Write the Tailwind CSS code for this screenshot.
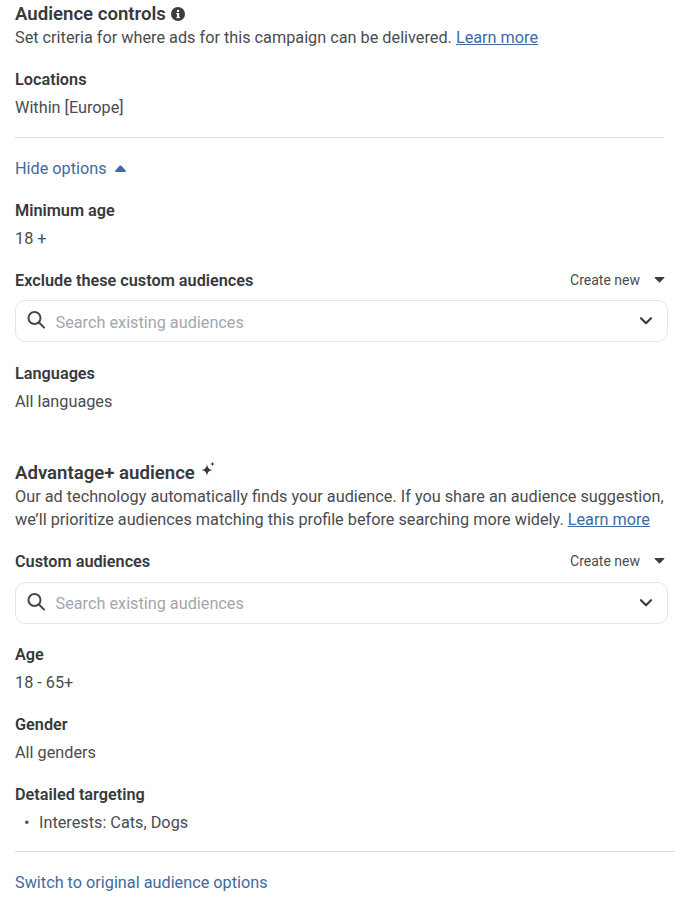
<!DOCTYPE html>
<html><head><meta charset="utf-8"><script src="https://cdn.jsdelivr.net/npm/@tailwindcss/browser@4"></script></head>
<body class="bg-white overflow-hidden">
<main class="w-[689px] h-[900px] overflow-hidden pl-[15px] font-['Roboto',sans-serif] text-[16.25px] leading-[24px] text-[#4a4c50]">
  <section class="pt-[2px]">
    <div class="flex items-center gap-[5px] h-[24px]">
      <h2 class="text-[18.6px] font-semibold text-[#37393c]">Audience controls</h2>
      <svg class="w-[14px] h-[14px]" viewBox="0 0 14 14"><circle cx="7" cy="7" r="7" fill="#3a3d42"/><rect x="6" y="6" width="2.2" height="5" fill="#fff"/><rect x="5.2" y="6" width="2" height="1.1" fill="#fff"/><rect x="5.4" y="10" width="3.6" height="1.1" fill="#fff"/><circle cx="7" cy="3.9" r="1.2" fill="#fff"/></svg>
    </div>
    <p>Set criteria for where ads for this campaign can be delivered. <a class="text-[#3f6a9f] underline">Learn more</a></p>
  </section>
  <section class="mt-[18px]">
    <h3 class="font-semibold text-[#37393c]">Locations</h3>
    <p class="mt-[4px]">Within [Europe]</p>
  </section>
  <hr class="w-[649px] mt-[17px] border-[#dcdddf]">
  <button class="flex items-center gap-[8px] mt-[19px] h-[24px] text-[#3f6a9f]">Hide options
    <svg class="w-[11px] h-[7px] -mt-[2px]" viewBox="0 0 11 7"><path d="M4.300 1.100C5 .3 6 .3 6.700 1.100L10.600 5.400C11.100 6 10.900 7 10 7H1C.1 7-.1 6 .4 5.400Z" fill="#3f6ba3"/></svg>
  </button>
  <section class="mt-[18px]">
    <h3 class="font-semibold text-[#37393c]">Minimum age</h3>
    <p class="mt-[4px]">18 +</p>
  </section>
  <section class="mt-[18px] w-[653px]">
    <div class="flex justify-between items-center h-[24px]">
      <h3 class="font-semibold text-[#37393c]">Exclude these custom audiences</h3>
      <span class="flex items-center gap-[14px] text-[14px] pr-[3px] relative -top-[1px]">Create new <svg class="w-[11px] h-[6px]" viewBox="0 0 12 7"><path d="M.7 0h10.600a.5.5 0 0 1 .4.8L6 6.800.3.800A.5.5 0 0 1 .7 0Z" fill="#3a3d42"/></svg></span>
    </div>
    <div class="mt-[7px] h-[42px] border-[1.5px] border-[#e4e5e7] rounded-[10px] flex items-center pl-[9.5px] pr-[15.5px]">
      <svg class="w-[20px] h-[20px] shrink-0 -mt-[2px]" viewBox="0 0 20 20" fill="none" stroke="#44474c" stroke-width="2"><circle cx="8.500" cy="8" r="6"/><path d="m13 12.500 5 5" stroke-linecap="round"/></svg>
      <span class="ml-[10px] text-[#a3a7ad] flex-1 relative top-[2px]">Search existing audiences</span>
      <svg class="w-[12px] h-[8px]" viewBox="0 0 12 8" fill="none" stroke="#3a3d42" stroke-width="2.200"><path d="m1 1.200 5 5 5-5" stroke-linecap="round" stroke-linejoin="round"/></svg>
    </div>
  </section>
  <section class="mt-[20px]">
    <h3 class="font-semibold text-[#37393c]">Languages</h3>
    <p class="mt-[4px]">All languages</p>
  </section>
  <section class="mt-[47px]">
    <div class="flex items-start h-[24px]">
      <h2 class="text-[18.6px] font-semibold text-[#37393c]">Advantage+ audience</h2>
      <svg class="w-[15px] h-[15px] ml-[6px]" viewBox="0 0 15 15" fill="#37393c"><path d="M6 3C6.500 7 8 8.500 12 9 8 9.500 6.500 11 6 15 5.500 11 4 9.500 0 9 4 8.500 5.500 7 6 3Z"/><path d="M11.500.5C11.700 2 12.200 2.600 14 3 12.200 3.400 11.700 4 11.500 5.500 11.300 4 10.800 3.400 9 3 10.800 2.600 11.300 2 11.500.5Z"/></svg>
    </div>
    <p class="whitespace-nowrap leading-[23px]">Our ad technology automatically finds your audience. If you share an audience suggestion,<br>we’ll prioritize audiences matching this profile before searching more widely. <a class="text-[#3f6a9f] underline">Learn more</a></p>
  </section>
  <section class="mt-[19px] w-[653px]">
    <div class="flex justify-between items-center h-[24px]">
      <h3 class="font-semibold text-[#37393c]">Custom audiences</h3>
      <span class="flex items-center gap-[14px] text-[14px] pr-[3px] relative -top-[1px]">Create new <svg class="w-[11px] h-[6px]" viewBox="0 0 12 7"><path d="M.7 0h10.600a.5.5 0 0 1 .4.8L6 6.800.3.800A.5.5 0 0 1 .7 0Z" fill="#3a3d42"/></svg></span>
    </div>
    <div class="mt-[8px] h-[42px] border-[1.5px] border-[#e4e5e7] rounded-[10px] flex items-center pl-[9.5px] pr-[15.5px]">
      <svg class="w-[20px] h-[20px] shrink-0 -mt-[2px]" viewBox="0 0 20 20" fill="none" stroke="#44474c" stroke-width="2"><circle cx="8.500" cy="8" r="6"/><path d="m13 12.500 5 5" stroke-linecap="round"/></svg>
      <span class="ml-[10px] text-[#a3a7ad] flex-1 relative top-[1px]">Search existing audiences</span>
      <svg class="w-[12px] h-[8px]" viewBox="0 0 12 8" fill="none" stroke="#3a3d42" stroke-width="2.200"><path d="m1 1.200 5 5 5-5" stroke-linecap="round" stroke-linejoin="round"/></svg>
    </div>
  </section>
  <section class="mt-[19px]">
    <h3 class="font-semibold text-[#37393c]">Age</h3>
    <p class="mt-[4px]">18 - 65+</p>
  </section>
  <section class="mt-[18px]">
    <h3 class="font-semibold text-[#37393c]">Gender</h3>
    <p class="mt-[4px]">All genders</p>
  </section>
  <section class="mt-[18px]">
    <h3 class="font-semibold text-[#37393c]">Detailed targeting</h3>
    <ul class="mt-[4px]"><li class="flex"><span class="w-[24px] pl-[9px]">•</span>Interests: Cats, Dogs</li></ul>
  </section>
  <hr class="w-[660px] mt-[16px] border-[#dcdddf]">
  <a class="block mt-[19px] text-[#3f6a9f]">Switch to original audience options</a>
</main>
</body></html>
